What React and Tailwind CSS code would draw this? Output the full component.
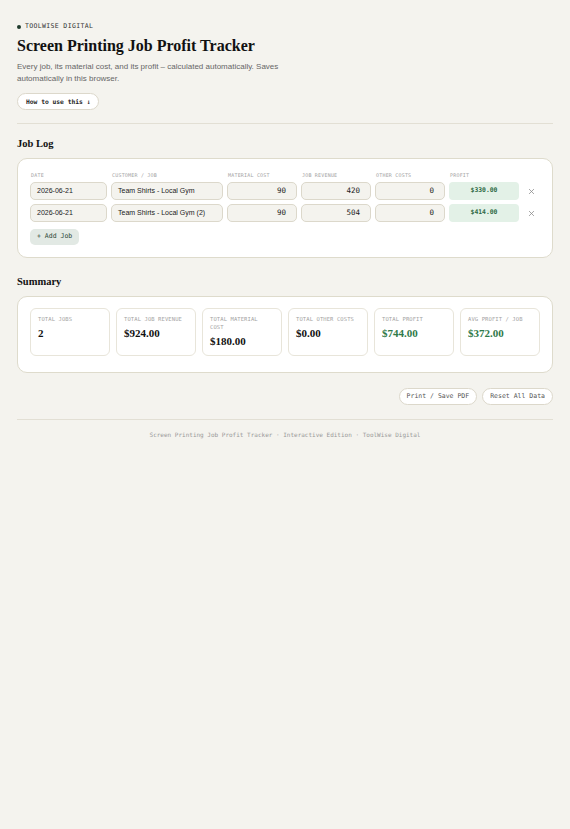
import React from "react";

const mono = "font-['DejaVu_Sans_Mono',monospace]";
const serif = "font-['Liberation_Serif',serif]";
const sans = "font-['Liberation_Sans',Arial,sans-serif]";

const rows = [
  { date: "2026-06-21", name: "Team Shirts - Local Gym", mat: "90", rev: "420", oth: "0", profit: "$330.00" },
  { date: "2026-06-21", name: "Team Shirts - Local Gym (2)", mat: "90", rev: "504", oth: "0", profit: "$414.00" },
];

const stats = [
  { label: "TOTAL JOBS", value: "2" },
  { label: "TOTAL JOB REVENUE", value: "$924.00" },
  { label: "TOTAL MATERIAL COST", value: "$180.00" },
  { label: "TOTAL OTHER COSTS", value: "$0.00" },
  { label: "TOTAL PROFIT", value: "$744.00", green: true },
  { label: "AVG PROFIT / JOB", value: "$372.00", green: true },
];

function Field({ children, right, isMono }) {
  return (
    <div
      className={`h-[18px] flex items-center rounded-[5px] border border-[#dcd8cb] bg-[#f4f3ee] px-[6px] text-[#222] ${
        right ? "justify-end pr-[10px]" : ""
      } ${isMono ? `${mono} text-[7.5px]` : `${sans} text-[7px]`}`}
    >
      {children}
    </div>
  );
}

export default function App() {
  const grid = "grid grid-cols-[77px_112px_70px_70px_70px_70px_1fr] gap-x-[4px]";
  return (
    <div className="min-h-screen bg-[#f4f3ee] px-[17px] pt-[22px] pb-[20px]">
      <div className={`flex items-center gap-[4px] h-[10px] ${mono} text-[6.5px] tracking-[0.35px] text-[#333]`}>
        <span className="inline-block w-[4px] h-[4px] rounded-full bg-[#1f3b2c]" />
        <span>TOOLWISE DIGITAL</span>
      </div>
      <h1 className={`${serif} font-bold text-[16px] leading-[20px] text-[#111] mt-[4px]`}>
        Screen Printing Job Profit Tracker
      </h1>
      <p className={`${sans} text-[8px] leading-[12px] text-[#666] mt-[5px] max-w-[290px]`}>
        Every job, its material cost, and its profit – calculated automatically. Saves automatically in this browser.
      </p>
      <button
        className={`block mt-[8px] h-[17px] px-[8px] rounded-full border border-[#dcd8cb] bg-white ${mono} font-bold text-[6.3px] text-[#222]`}
      >
        How to use this ↓
      </button>
      <div className="mt-[13px] h-px bg-[#e2dfd4]" />

      <h2 className={`${serif} font-bold text-[10.5px] leading-[14px] text-[#111] mt-[13px]`}>Job Log</h2>
      <div className="mt-[7px] rounded-[10px] border border-[#dedbcc] bg-white pl-[12px] pr-[12px] pt-[12px] pb-[12px]">
        <div className={`${grid} ${mono} text-[5px] tracking-[0.2px] leading-[8px] text-[#a3a3a3] pl-[1px]`}>
          <div>DATE</div>
          <div>CUSTOMER / JOB</div>
          <div>MATERIAL COST</div>
          <div>JOB REVENUE</div>
          <div>OTHER COSTS</div>
          <div>PROFIT</div>
          <div />
        </div>
        <div className="mt-[3px] flex flex-col gap-[4px]">
          {rows.map((r, i) => (
            <div key={i} className={grid}>
              <Field>{r.date}</Field>
              <Field>{r.name}</Field>
              <Field right isMono>{r.mat}</Field>
              <Field right isMono>{r.rev}</Field>
              <Field right isMono>{r.oth}</Field>
              <div className={`h-[18px] flex items-center justify-center rounded-[4px] bg-[#e3f1e7] ${mono} font-bold text-[6.4px] text-[#2e6a45]`}>
                {r.profit}
              </div>
              <div className="flex items-center justify-center text-[#8a8a8a]">
                <svg width="7" height="7" viewBox="0 0 10 10" fill="none" stroke="currentColor" strokeWidth="1.1">
                  <path d="M1.5 1.5 L8.5 8.5 M8.5 1.5 L1.5 8.5" />
                </svg>
              </div>
            </div>
          ))}
        </div>
        <button
          className={`block mt-[7px] h-[16px] px-[7px] rounded-[5px] bg-[#e2e9e4] ${mono} text-[6.5px] text-[#2e4a3a]`}
        >
          + Add Job
        </button>
      </div>

      <h2 className={`${serif} font-bold text-[10.5px] leading-[14px] text-[#111] mt-[17px]`}>Summary</h2>
      <div className="mt-[7px] rounded-[10px] border border-[#dedbcc] bg-white px-[12px] pt-[11px] pb-[16px]">
        <div className="grid grid-cols-6 gap-[6px]">
          {stats.map((s, i) => (
            <div key={i} className="rounded-[6px] border border-[#e8e5da] bg-white px-[7px] pt-[6px] pb-[7px] min-h-[47px]">
              <div className={`${mono} text-[5.5px] leading-[8px] tracking-[0.1px] text-[#a3a3a3]`}>{s.label}</div>
              <div
                className={`${serif} font-bold text-[11px] leading-[14px] mt-[3px] ${
                  s.green ? "text-[#2f7a4a]" : "text-[#111]"
                }`}
              >
                {s.value}
              </div>
            </div>
          ))}
        </div>
      </div>

      <div className="mt-[15px] flex justify-end gap-[5px]">
        <button className={`h-[17px] px-[7px] rounded-full border border-[#dcd8cb] bg-white ${mono} text-[6.5px] text-[#555]`}>
          Print / Save PDF
        </button>
        <button className={`h-[17px] px-[7px] rounded-full border border-[#dcd8cb] bg-white ${mono} text-[6.5px] text-[#555]`}>
          Reset All Data
        </button>
      </div>
      <div className="mt-[14px] h-px bg-[#e2dfd4]" />
      <div className={`mt-[10px] text-center ${mono} text-[6px] leading-[10px] text-[#999]`}>
        Screen Printing Job Profit Tracker · Interactive Edition · ToolWise Digital
      </div>
    </div>
  );
}
